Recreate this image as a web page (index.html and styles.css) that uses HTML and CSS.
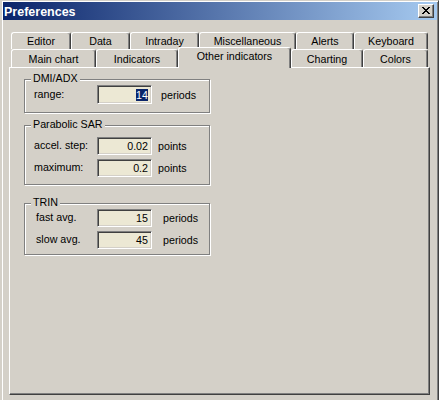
FILE: index.html
```html
<!DOCTYPE html>
<html>
<head>
<meta charset="utf-8">
<title>Preferences</title>
<link rel="stylesheet" href="styles.css">
</head>
<body>
<div class="window">
  <div class="titlebar">
    <span class="title">Preferences</span>
    <div class="close">
      <svg width="8" height="7" viewBox="0 0 8 7"><path fill="#000" d="M0 0h2v1H0zM6 0h2v1H6zM1 1h2v1H1zM5 1h2v1H5zM2 2h4v1H2zM3 3h2v1H3zM2 4h4v1H2zM1 5h2v1H1zM5 5h2v1H5zM0 6h2v1H0zM6 6h2v1H6z"/></svg>
    </div>
  </div>
  <div class="tabctl">
    <div class="tabrow row1">
      <div class="tab t-editor">Editor</div>
      <div class="tab t-data">Data</div>
      <div class="tab t-intraday">Intraday</div>
      <div class="tab t-misc">Miscellaneous</div>
      <div class="tab t-alerts">Alerts</div>
      <div class="tab t-keyboard">Keyboard</div>
    </div>
    <div class="tabrow row2">
      <div class="tab t-main">Main chart</div>
      <div class="tab t-ind">Indicators</div>
      <div class="tab t-other active">Other indicators</div>
      <div class="tab t-charting">Charting</div>
      <div class="tab t-colors">Colors</div>
    </div>
    <div class="panel">
      <div class="group g-dmi">
        <span class="legend">DMI/ADX</span>
        <div class="row">
          <span class="lbl">range:</span>
          <div class="field"><span class="sel">14</span></div>
          <span class="unit">periods</span>
        </div>
      </div>
      <div class="group g-sar">
        <span class="legend">Parabolic SAR</span>
        <div class="row">
          <span class="lbl">accel. step:</span>
          <div class="field">0.02</div>
          <span class="unit">points</span>
        </div>
        <div class="row">
          <span class="lbl">maximum:</span>
          <div class="field">0.2</div>
          <span class="unit">points</span>
        </div>
      </div>
      <div class="group g-trin">
        <span class="legend">TRIN</span>
        <div class="row">
          <span class="lbl">fast avg.</span>
          <div class="field">15</div>
          <span class="unit">periods</span>
        </div>
        <div class="row">
          <span class="lbl">slow avg.</span>
          <div class="field">45</div>
          <span class="unit">periods</span>
        </div>
      </div>
    </div>
  </div>
</div>
</body>
</html>
```

FILE: styles.css
```css
* { box-sizing: border-box; }

body {
  margin: 0;
  background: #d4d0c8;
  font-family: "Liberation Sans", Arial, sans-serif;
  font-size: 10.7px;
  color: #000;
}

.window {
  width: 439px;
  height: 400px;
  overflow: hidden;
  background: #d4d0c8;
  border-left: 2px solid #d4d0c8;
  border-top: 1px solid #d4d0c8;
  border-right: 1px solid #404040;
  padding: 1px 1px 0 1px;
  box-shadow: inset 1px 1px 0 #fff, inset -1px 0 0 #808080;
}

.titlebar {
  height: 18px;
  display: flex;
  align-items: center;
  justify-content: space-between;
  background: linear-gradient(to right, #0a246a, #a6caf0);
  padding: 0 3px 0 1px;
}

.title {
  color: #fff;
  font-weight: bold;
  font-size: 12.5px;
  line-height: 18px;
  padding-top: 1px;
}

.close {
  width: 16px;
  height: 14px;
  background: #d4d0c8;
  border-top: 1px solid #fff;
  border-left: 1px solid #fff;
  border-right: 1px solid #404040;
  border-bottom: 1px solid #404040;
  box-shadow: inset -1px -1px 0 #808080;
  display: flex;
  align-items: center;
  justify-content: center;
  padding-bottom: 1px;
}

.close svg { display: block; }

.tabctl {
  margin: 12px 0 0 6px;
  width: 421px;
}

.tabrow {
  display: flex;
  align-items: flex-start;
  padding-left: 2px;
}

.row1 { height: 17px; }
.row2 { height: 18px; }

.tab {
  background: #d4d0c8;
  border-top: 1px solid #fff;
  border-left: 1px solid #fff;
  border-right: 1px solid #404040;
  box-shadow: inset -1px 0 0 #808080;
  border-radius: 3px 3px 0 0;
  text-align: center;
  line-height: 13px;
  white-space: nowrap;
}

.row1 .tab { height: 17px; padding-top: 2px; }
.row2 .tab { height: 18px; padding-top: 3px; }

.row2 .tab.active {
  height: 21px;
  margin-top: -2px;
  padding-top: 2px;
  position: relative;
  z-index: 1;
}

.t-editor { width: 60px; }
.t-data { width: 59px; }
.t-intraday { width: 69px; }
.t-misc { width: 97px; }
.t-alerts { width: 58px; }
.t-keyboard { width: 74px; }

.t-main { width: 85px; }
.t-ind { width: 82px; }
.t-other { width: 113px; }
.t-charting { width: 72px; }
.t-colors { width: 65px; }

.panel {
  height: 328px;
  border-top: 1px solid #fff;
  border-left: 1px solid #fff;
  border-right: 1px solid #404040;
  border-bottom: 1px solid #404040;
  box-shadow: inset -1px -1px 0 #808080;
  padding: 11px 0 0 14px;
}

.group {
  position: relative;
  width: 186px;
  border: 1px solid #808080;
  box-shadow: inset 1px 1px 0 #fff, 1px 1px 0 #fff;
}

.legend {
  position: absolute;
  left: 6px;
  top: -8px;
  padding: 0 2px;
  background: #d4d0c8;
  line-height: 13px;
}

.g-dmi { padding: 5px 0 8px 9px; }
.g-sar { margin-top: 12px; padding: 11px 0 7px 9px; }
.g-trin { margin-top: 18px; padding: 5px 0 5px 11px; }

.row {
  display: flex;
  align-items: center;
  height: 18px;
}

.g-dmi .row { height: 19px; }

.row + .row { margin-top: 4px; }

.lbl { width: 63px; white-space: nowrap; padding-bottom: 2px; }
.g-trin .lbl { width: 61px; }

.field {
  width: 55px;
  height: 100%;
  background: #ece8d4;
  border: 1px solid;
  border-color: #808080 #fff #fff #808080;
  box-shadow: inset 1px 1px 0 #404040, inset -1px -1px 0 #d4d0c8;
  display: flex;
  align-items: center;
  justify-content: flex-end;
  padding: 0 3px 0 0;
  line-height: 12px;
}

.sel {
  background: #0a246a;
  color: #fff;
  line-height: 12px;
}

.unit { white-space: nowrap; }
.g-dmi .unit { margin-left: 9px; }
.g-sar .unit { margin-left: 6px; }
.g-trin .unit { margin-left: 11px; }
```
